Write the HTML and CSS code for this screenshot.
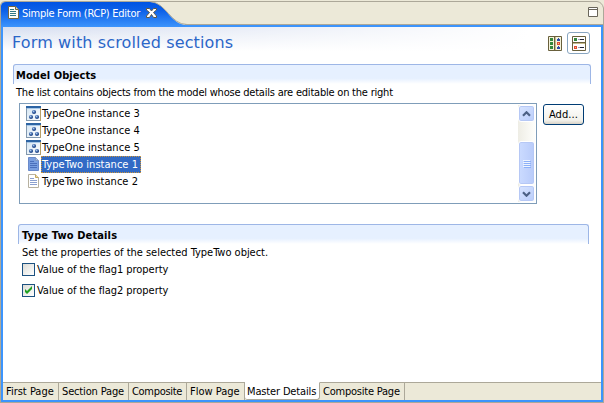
FILE: index.html
```html
<!DOCTYPE html>
<html lang="en">
<head>
<meta charset="utf-8">
<title>Simple Form (RCP) Editor</title>
<link rel="stylesheet" href="styles.css">
</head>
<body>
<svg class="defs" width="0" height="0">
  <defs>
    <linearGradient id="tabfill" x1="0" y1="0" x2="0" y2="1"><stop offset="0" stop-color="#0054e3"/><stop offset=".35" stop-color="#0d61e8"/><stop offset="1" stop-color="#3c94fc"/></linearGradient>
    <radialGradient id="ball" cx=".4" cy=".35"><stop offset="0" stop-color="#b8d2f2"/><stop offset=".5" stop-color="#5079b8"/><stop offset="1" stop-color="#244a8a"/></radialGradient>
    <linearGradient id="pane" x1="0" y1="0" x2="1" y2="1"><stop offset="0" stop-color="#d3e4f2"/><stop offset="1" stop-color="#fff"/></linearGradient>
    <symbol id="one" viewBox="0 0 15 15">
      <rect x=".5" y=".5" width="14" height="14" fill="url(#pane)" stroke="#8298ae"/>
      <path d="M0 0h15v2H0z" fill="#2c64a4"/><path d="M1 2h13v1H1z" fill="#a8c8e8"/><path d="M14 2h1v13h-1z" fill="#b79f68"/>
      <circle cx="8" cy="6" r="2.1" fill="url(#ball)"/><circle cx="5" cy="11" r="2.1" fill="url(#ball)"/><circle cx="11" cy="11" r="2.1" fill="url(#ball)"/>
    </symbol>
  </defs>
</svg>
<div class="editor">
  <header class="tabbar">
    <svg class="tabshape" width="604" height="27" viewBox="0 0 604 27">
      <path d="M.5 27V5Q1 1.500 5 1.500H597Q602 2 603.500 8V27" fill="#ece9d8" stroke="#aca899"/>
      <path d="M185 24.500H603" stroke="#aca899"/>
      <path d="M1 27V6Q1.500 2 6 2H150C166 2 170 25 187 25H603V27z" fill="url(#tabfill)"/>
      <path d="M150 1.500C167 3 170 24.500 187 24.500" fill="none" stroke="#aca899"/>
      <path d="M185 25h418v2H185z" fill="#3c94fc"/>
    </svg>
    <svg class="tabicon" width="12" height="14" viewBox="0 0 12 14">
      <path d="M.5.5h7l3 3v9H.5z" fill="#fffef6" stroke="#716646"/><path d="M7.500.5v3h3" fill="#e8dcae" stroke="#716646"/>
      <path d="M2 3.500h4M2 5.500h6M2 7.500h6M2 9.500h6" stroke="#327986"/>
    </svg>
    <span class="tabname">Simple Form (RCP) Editor</span>
    <svg class="close" width="11" height="10" viewBox="0 0 11 10"><path d="M.5.5h3L5.500 3 7.500.5h3V2L7.500 4.500 10.500 8v1.500h-3L5.500 6.500 3.500 9.500h-3V8L3.500 4.500.5 2z" fill="#fff" stroke="#5c5748"/></svg>
    <svg class="maximize" width="10" height="10" viewBox="0 0 10 10"><path d="M.5.500h9v9h-9zM0 2.500h10" fill="#fff" stroke="#6a665a"/></svg>
  </header>
  <main class="form">
    <div class="formhead">
      <h1>Form with scrolled sections</h1>
      <svg class="layoutv" width="14" height="15" viewBox="0 0 14 15">
        <path d="M.5.5h13v14H.5z" fill="#f5f3dc" stroke="#69603c"/><path d="M7 1v13" stroke="#69603c" stroke-width="2"/><path d="M7.500 1v13" stroke="#c5bb8c"/>
        <path d="M2 2h3v3H2zM2 6h3v3H2zM2 10h3v3H2z" fill="#34873c"/><path d="M10 2h1v1h1v2H9V3h1zM10 10h1v1h1v2H9v-2h1z" fill="#304ca8"/><path d="M9 6h3v3H9z" fill="#df4c32"/><path d="M10 7h1v1h-1z" fill="#ffb68c"/>
      </svg>
      <div class="toggle">
        <svg width="14" height="15" viewBox="0 0 14 15">
          <path d="M.5.500h13v14H.5z" fill="#fff" stroke="#69603c"/><path d="M1 7h12" stroke="#69603c" stroke-width="2"/><path d="M1 7.500h12" stroke="#c5bb8c"/>
          <path d="M2 2h3v3H2z" fill="#34873c"/><path d="M2 10h3v3H2z" fill="#df4c32"/><path d="M3 11h1v1H3z" fill="#ffb68c"/><path d="M6 3.500h6M6 11.500h6" stroke="#a0a4bc"/><path d="M8 3.500h4M8 11.500h4" stroke="#22263a"/>
        </svg>
      </div>
    </div>
    <section class="section master">
      <h2>Model Objects</h2>
      <p class="t-desc1">The list contains objects from the model whose details are editable on the right</p>
      <div class="row">
        <div class="list">
          <ul>
            <li><svg width="15" height="15"><use href="#one"/></svg><span>TypeOne instance 3</span></li>
            <li><svg width="15" height="15"><use href="#one"/></svg><span>TypeOne instance 4</span></li>
            <li><svg width="15" height="15"><use href="#one"/></svg><span>TypeOne instance 5</span></li>
            <li class="selected"><svg width="15" height="15" viewBox="0 0 15 15"><path d="M2.500.5h7l3 3v10h-10z" fill="#789ee0" stroke="#6a8aca"/><path d="M9.500.5v3h3" fill="#a9bfe3" stroke="#8299c0"/><path d="M4 4.500h4M4 6.500h7M4 8.500h7M4 10.500h7" stroke="#4a6fbb"/></svg><span>TypeTwo instance 1</span></li>
            <li><svg width="15" height="15" viewBox="0 0 15 15"><path d="M2.500.5h7l3 3v10h-10z" fill="#fff" stroke="#b7b1a0"/><path d="M9.500.5v3h3" fill="#f1dca2" stroke="#c5a85f"/><path d="M4 4.500h4M4 6.500h7M4 8.500h7M4 10.500h7" stroke="#8ba0cf"/></svg><span>TypeTwo instance 2</span></li>
          </ul>
          <div class="scrollbar">
            <div class="arrow"><svg width="9" height="6" viewBox="0 0 9 6"><path d="M1 4.800l3.500-3.500L8 4.800" fill="none" stroke="#4d6185" stroke-width="2.200"/></svg></div>
            <div class="track"></div>
            <div class="thumb"><i></i><i></i><i></i><i></i></div>
            <div class="arrow"><svg width="9" height="6" viewBox="0 0 9 6"><path d="M1 1.200l3.500 3.500L8 1.200" fill="none" stroke="#4d6185" stroke-width="2.200"/></svg></div>
          </div>
        </div>
        <button class="add">Add...</button>
      </div>
    </section>
    <section class="section details">
      <h2>Type Two Details</h2>
      <p class="t-desc2">Set the properties of the selected TypeTwo object.</p>
      <div class="check"><div class="box"></div><span>Value of the flag1 property</span></div>
      <div class="check"><div class="box"><svg width="11" height="11" viewBox="0 0 11 11"><path d="M2 4v3l2 2 5-5V1L4 6z" fill="#21a121"/></svg></div><span>Value of the flag2 property</span></div>
    </section>
  </main>
  <nav class="pages">
    <div class="page p1"><span>First Page</span></div>
    <div class="page p2"><span>Section Page</span></div>
    <div class="page p3"><span>Composite</span></div>
    <div class="page p4"><span>Flow Page</span></div>
    <div class="page p5 current"><span>Master Details</span></div>
    <div class="page p6"><span>Composite Page</span></div>
    <div class="rest"></div>
  </nav>
</div>
</body>
</html>
```
FILE: styles.css
```css
* { box-sizing: border-box; }
body { margin: 0; width: 604px; height: 403px; overflow: hidden; background: #ece9d8; color: #000; font: 11px/17px "DejaVu Sans Condensed", "DejaVu Sans", sans-serif; font-stretch: condensed; }
h1, h2, p, ul { margin: 0; padding: 0; }
span, p, h1, h2 { white-space: nowrap; }
svg { display: block; flex: none; }
.defs { position: absolute; }
.editor { height: 403px; display: flex; flex-direction: column; background: #aca899; border-bottom: 1px solid #aca899; }
.tabbar { position: relative; height: 27px; flex: none; display: flex; align-items: flex-start; padding-left: 8px; background: #ece9d8; }
.tabshape { position: absolute; left: 0; top: 0; }
.tabicon { position: relative; margin-top: 6px; }
.tabname { position: relative; margin: 5px 0 0 2px; width: 118px; color: #fff; letter-spacing: -.26px; }
.close { position: relative; margin: 8px 0 0 6px; }
.maximize { position: relative; margin: 7px 6px 0 auto; }
.form { flex: 1; background: #fff; border: solid #3c94fc; border-width: 0 2px; }
.form, .pages { margin: 0 1px; }
.formhead { height: 37px; display: flex; align-items: flex-start; padding: 5px 11px 0 9px; background: linear-gradient(to right, transparent, #fff 88%), linear-gradient(#d6def0, #fff 24px); }
h1 { font: 16px/20px "DejaVu Sans", sans-serif; letter-spacing: .14px; padding-top: 1px; color: #2b66c8; flex: 1; }
.layoutv { margin-top: 4px; }
.toggle { width: 23px; height: 22px; margin-left: 5px; border: 1px solid #88a5c0; border-radius: 3px; display: flex; align-items: center; justify-content: center; }
.section h2 { height: 20px; padding: 2px 0 0 2px; font-size: 11px; line-height: 17px; font-weight: bold; letter-spacing: .07px; border: 1px solid #9db6e6; border-bottom: 0; border-radius: 3px 3px 0 0; background: linear-gradient(#e6f0ff 70%, #fff); }
.section p { padding-left: 3px; height: 19px; }
.section .t-desc1 { letter-spacing: -.215px; }
.master { margin: 0 10px; width: 578px; }
.row { display: flex; padding-left: 6px; gap: 6px; }
.list { width: 518px; height: 101px; border: 1px solid #7f9db9; display: flex; justify-content: space-between; padding: 1px; }
.list ul { list-style: none; padding-left: 5px; }
.list li { display: flex; align-items: center; height: 17px; }
.list li span { padding: 0 1px; height: 17px; line-height: 18px; width: 100px; letter-spacing: .03px; }
.selected span { background: #316ac5; color: #fff; outline: 1px dotted #ce953a; outline-offset: -1px; }
.scrollbar { width: 17px; display: flex; flex-direction: column; background: linear-gradient(to right, #eeede5, #fefefb); }
.arrow, .thumb { border: 1px solid #fff; border-radius: 3px; background: linear-gradient(135deg, #d9e5ff, #b9cdfb); display: flex; align-items: center; justify-content: center; box-shadow: inset 0 0 0 1px #b6c8f5; }
.arrow { height: 17px; }
.track { height: 19px; }
.thumb { height: 44px; flex-direction: column; gap: 1px; background: linear-gradient(to right, #cbdbff, #b8cbfa); }
.thumb i { width: 7px; height: 1px; background: #eef4fe; box-shadow: 1px 1px #8cb0f8; }
.add { width: 41px; height: 21px; margin-top: 1px; padding: 0; border: 1px solid #003c74; border-radius: 3px; background: linear-gradient(#fff, #f2f1eb 80%, #d9d3c7); font: inherit; letter-spacing: .1px; }
.details { width: 571px; margin: 20px 0 0 15px; }
.details h2 { padding-left: 3px; letter-spacing: .13px; }
.details p { height: 15px; padding-left: 4px; letter-spacing: -.02px; }
.check { height: 21px; display: flex; align-items: center; padding-left: 4px; gap: 2px; letter-spacing: -.05px; }
.box { width: 13px; height: 13px; border: 1px solid #1c5180; background: linear-gradient(135deg, #dcdcd7, #fff); }
.pages { height: 20px; flex: none; display: flex; border: solid #3c94fc; border-width: 0 2px 2px; background: #ece9d8; }
.page { border-top: 1px solid #aca899; border-right: 1px solid #aca899; height: 18px; padding-left: 3px; line-height: 18px; }
.rest { flex: 1; border-top: 1px solid #aca899; }
.p1 { width: 56px; } 
.p2 { width: 70px; letter-spacing: -.15px; }
.p3 { width: 58px; letter-spacing: -.3px; }
.p4 { width: 58px; }
.p5 { width: 75px; padding-left: 2px; letter-spacing: -.15px; }
.p6 { width: 85px; letter-spacing: -.22px; }
.current { background: #fff; border-top-color: #fff; border-bottom: 1px solid #aca899; border-radius: 0 0 3px 3px; }
```
